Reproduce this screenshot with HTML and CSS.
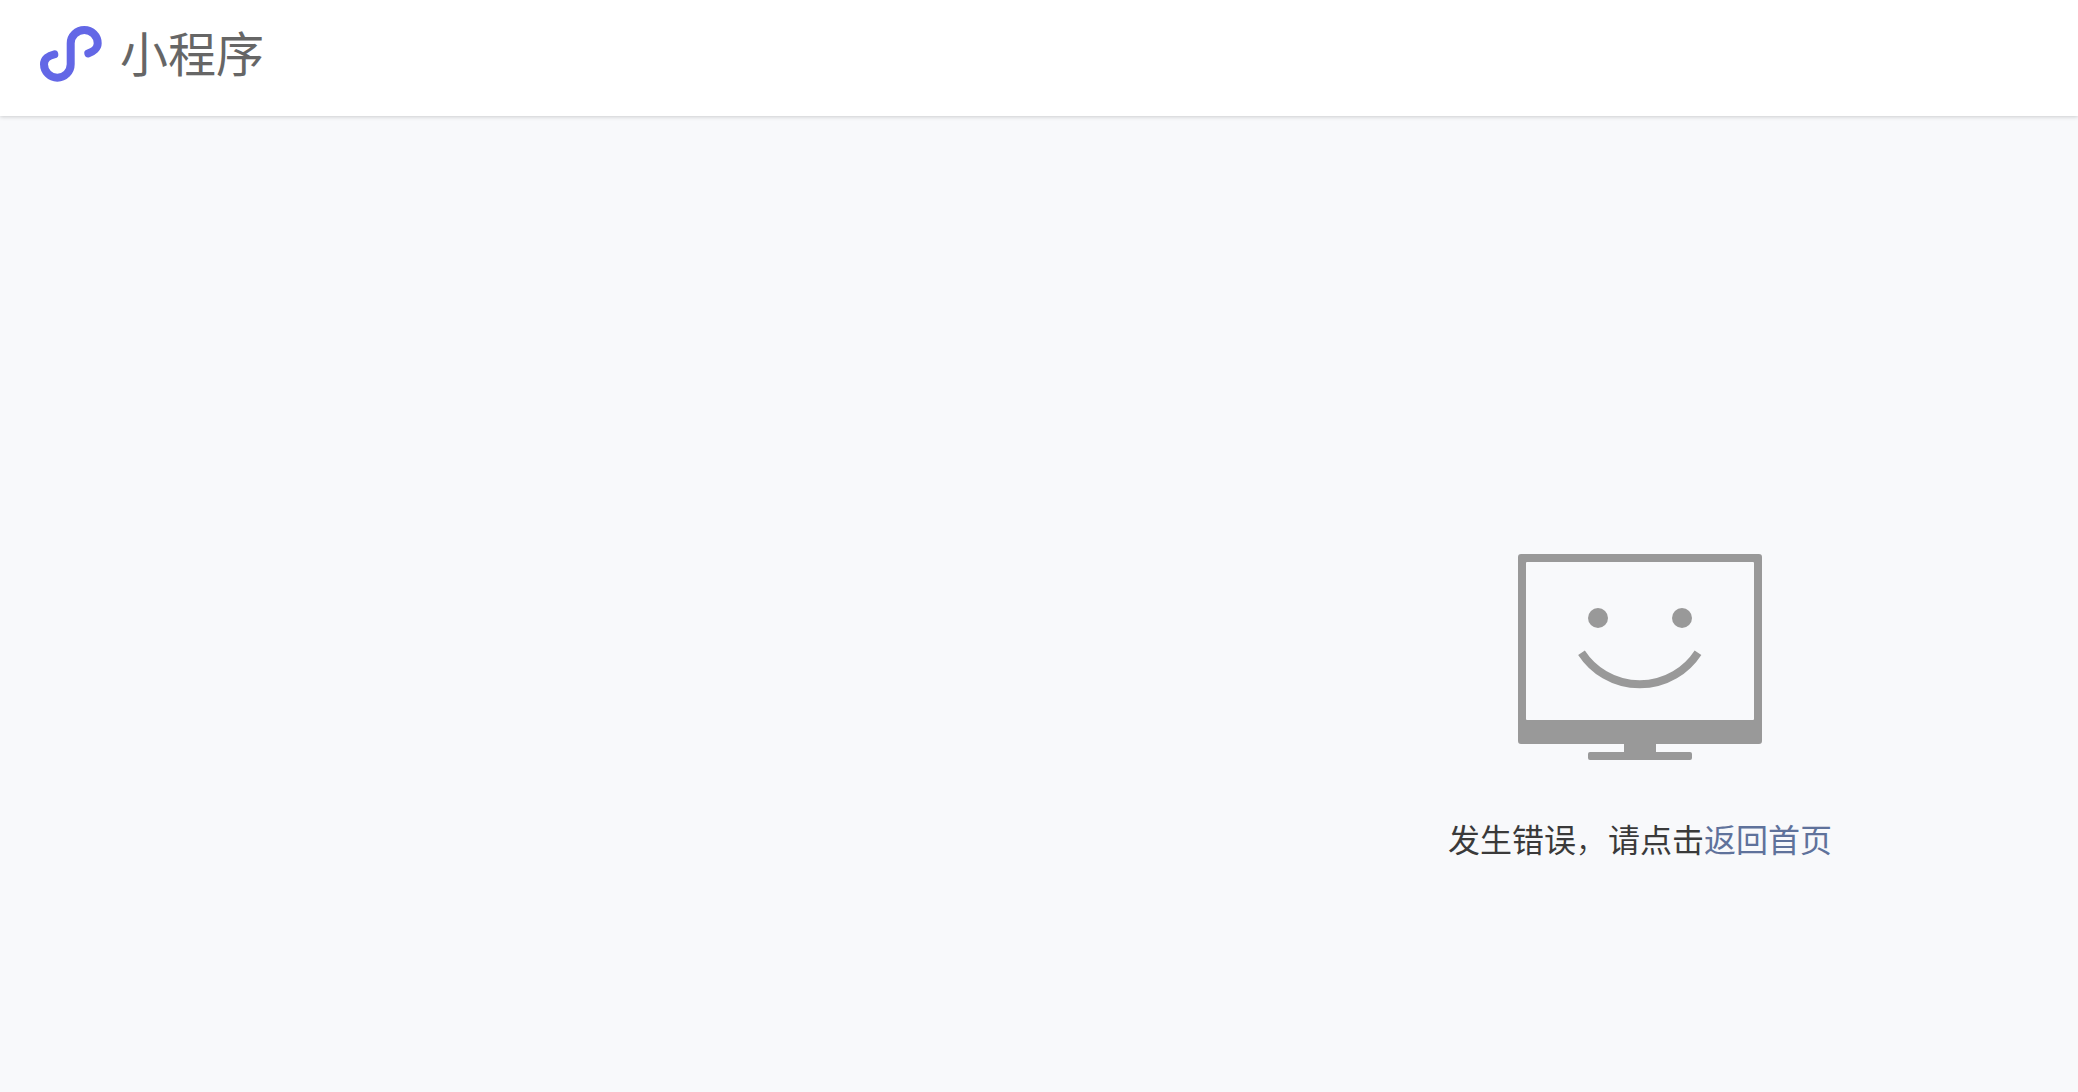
FILE: index.html
```html
<!DOCTYPE html>
<html lang="zh-CN">
  <head>
    <meta charset="UTF-8" />
    <meta name="viewport" content="width=device-width, initial-scale=1.0" />
    <title>小程序</title>
    <link rel="stylesheet" href="styles.css">
  </head>
  <body>
    <header class="header">
      <svg class="logo" viewBox="0 0 62 56" aria-hidden="true">
        <path d="M14.3 28.3C8.5 29.5 4 33 4 38.3C4 45.7 10 51.7 17.3 51.7C24.7 51.7 30.7 45.7 30.7 38.3V17.3C30.7 9.9 36.9 4 44.3 4C51.7 4 57.7 9.9 57.7 17.3C57.7 22 53.5 25.8 48.3 27.3" />
      </svg>
      <span class="brand">小程序</span>
    </header>
    <main class="content">
      <svg class="monitor" viewBox="0 0 244 206" aria-hidden="true">
        <path class="monitor-body" fill-rule="evenodd" d="M3 0H241A3 3 0 0 1 244 3V187A3 3 0 0 1 241 190H138V198H172A2 2 0 0 1 174 200V204A2 2 0 0 1 172 206H72A2 2 0 0 1 70 204V200A2 2 0 0 1 72 198H106V190H3A3 3 0 0 1 0 187V3A3 3 0 0 1 3 0ZM9 8A1 1 0 0 0 8 9V165A1 1 0 0 0 9 166H235A1 1 0 0 0 236 165V9A1 1 0 0 0 235 8Z" />
        <circle class="monitor-body" cx="80" cy="64" r="10" />
        <circle class="monitor-body" cx="164" cy="64" r="10" />
        <path class="smile" d="M63.5 98.7A69.5 69.5 0 0 0 180 98.7" />
      </svg>
      <p class="message">发生错误<span class="comma">，</span>请点击<a class="home-link" href="#">返回首页</a></p>
    </main>
  </body>
</html>
```

FILE: styles.css
```css
* {
  box-sizing: border-box;
}

html,
body {
  height: 100%;
}

body {
  margin: 0;
  background-color: #f8f9fb;
  font-family: "Noto Sans CJK SC", "Liberation Sans", sans-serif;
  overflow: hidden;
}

.header {
  display: flex;
  align-items: center;
  gap: 18px;
  height: 116px;
  padding: 0 0 8px 40px;
  background-color: #fff;
  box-shadow: 0 1px 4px rgba(0, 0, 0, 0.18);
}

.logo {
  width: 62px;
  height: 56px;
  flex-shrink: 0;
}

.logo path {
  fill: none;
  stroke: #6367e6;
  stroke-width: 8;
  stroke-linecap: round;
}

.brand {
  padding-bottom: 6px;
  font-size: 48px;
  line-height: 56px;
  color: #666;
}

.content {
  display: flex;
  flex-direction: column;
  align-items: center;
  padding: 438px 0 0 1202px;
}

.monitor {
  width: 244px;
  height: 206px;
}

.monitor-body {
  fill: #999;
}

.smile {
  fill: none;
  stroke: #999;
  stroke-width: 8;
}

.message {
  margin: 54px 0 0;
  font-size: 32px;
  line-height: 48px;
  color: #3a3a3a;
}

.comma {
  display: inline-block;
  width: 32px;
  font-weight: 300;
}

.home-link {
  color: #5f729b;
  text-decoration: none;
}
```
